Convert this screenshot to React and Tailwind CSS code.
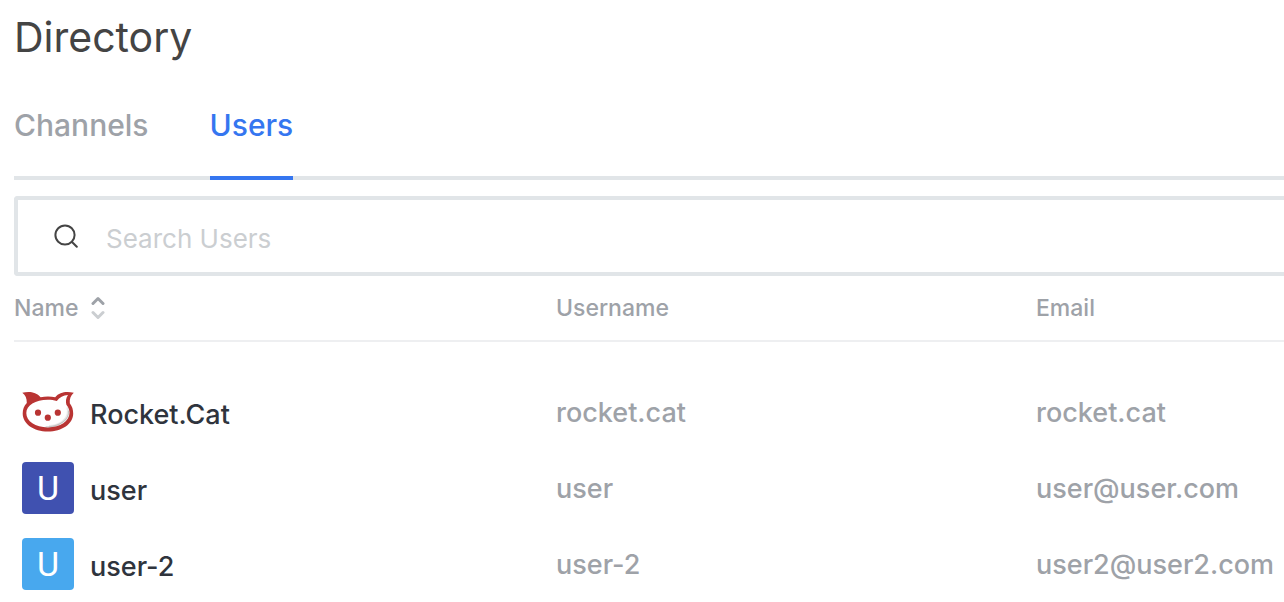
const users = [
  { name: 'Rocket.Cat', username: 'rocket.cat', email: 'rocket.cat', avatar: 'cat' },
  { name: 'user', username: 'user', email: 'user@user.com', avatar: 'bg-[#4051b0]' },
  { name: 'user-2', username: 'user-2', email: 'user2@user2.com', avatar: 'bg-[#48a8ee]' },
];

function RocketCat() {
  return (
    <svg viewBox="0 0 52 52" className="size-13 shrink-0" aria-hidden="true">
      <path
        d="M0.3 6.8C6 5.2 14 5.4 18.6 11.2C23 10.3 29 10.3 33.2 11.2C37.5 5.8 45 5 51.8 6.8C48.6 9.6 47.4 13 47.8 17.2C50.2 20.4 51.2 23.6 51.2 27.4C51.2 38 40 45.4 25.8 45.4C11.8 45.4 0.7 38 0.7 27.4C0.7 23.4 2 20 4.8 17C4.8 12.6 3.6 9.2 0.3 6.8Z"
        fill="#b93433"
      />
      <path
        d="M25.8 13.8C29 13.8 32 14.2 34.8 15.1C37.6 11.2 41.2 9.4 46 9C43.9 12 43.5 15.2 44.4 18.8C46.6 21.4 47.5 24 47.5 26.8C47.5 35.2 38.4 41.4 25.8 41.4C13.4 41.4 4.3 35.2 4.3 27C4.3 19.4 13.4 13.8 25.8 13.8Z"
        fill="#fff"
      />
      <g fill="none" stroke="#777" strokeLinecap="round">
        <path d="M45.6 22C48 31 40 39.2 28 40.2" strokeWidth="2.2" strokeOpacity="0.16" />
        <path d="M46.6 25C47.4 33.4 38.5 40.4 24 40.9" strokeWidth="1.2" strokeOpacity="0.32" />
      </g>
      <circle cx="16" cy="26.7" r="3.1" fill="#b93433" />
      <circle cx="35.8" cy="26.7" r="3.1" fill="#b93433" />
      <circle cx="25.8" cy="31.7" r="3.1" fill="#b93433" />
    </svg>
  );
}

function Avatar({ color }) {
  if (color === 'cat') return <RocketCat />;
  return (
    <span className={`flex size-13 shrink-0 items-center justify-center rounded font-['Roboto',sans-serif] text-[34px] leading-none font-normal text-white ${color}`}>
      U
    </span>
  );
}

export default function App() {
  return (
    <main className="overflow-hidden bg-white pl-3.5 font-['Inter',sans-serif]">
      <h1 className="pt-2 text-[41px] leading-[58px] text-[#444]">Directory</h1>

      <nav className="mt-[30px] flex gap-[61px] border-b-4 border-[#e1e5e8] text-[30px] leading-[58px] font-medium">
        <a href="#channels" className="-mb-1 h-[84px] border-b-4 border-transparent text-[#9ea2a8]">Channels</a>
        <a href="#users" aria-current="page" className="-mb-1 h-[84px] border-b-4 border-[#3576f0] text-[#3576f0]">Users</a>
      </nav>

      <label className="mt-4 flex h-20 items-center gap-7 rounded-l border-4 border-r-0 border-[#e1e5e8] pl-9">
        <svg viewBox="0 0 24 24" className="size-6 shrink-0" fill="none" stroke="#444" strokeWidth="2" strokeLinecap="round" aria-hidden="true">
          <circle cx="11" cy="11" r="9.6" />
          <path d="M18 18L22.8 22.8" />
        </svg>
        <input
          type="search"
          aria-label="Search Users"
          placeholder="Search Users"
          className="min-w-0 flex-1 bg-transparent pt-1.5 text-[26px] leading-10 text-[#444] outline-none placeholder:text-[#cbced1]"
        />
      </label>

      <table className="w-full table-fixed text-left">
        <colgroup>
          <col className="w-[542px]" />
          <col className="w-[480px]" />
          <col />
        </colgroup>
        <thead className="text-[23px] leading-8 text-[#9ea2a8]">
          <tr className="border-b-2 border-[#eeeff1]">
            <th aria-sort="ascending" className="pt-4 pb-4 font-medium">
              <button type="button" className="flex items-center gap-[13px]">
                Name
                <svg viewBox="0 0 14 24" className="h-6 w-3.5" fill="none" strokeWidth="3" strokeLinecap="round" strokeLinejoin="round" aria-hidden="true">
                  <path d="M2 7.5L7 2.5L12 7.5" stroke="#9ea2a8" />
                  <path d="M2 16.5L7 21.5L12 16.5" stroke="#cbced1" />
                </svg>
              </button>
            </th>
            <th className="pt-4 pb-4 font-medium">Username</th>
            <th className="pt-4 pb-4 font-medium">Email</th>
          </tr>
        </thead>
        <tbody className="text-[27px] leading-[54px] font-medium text-[#9ea2a8] before:block before:h-8">
          {users.map((user) => (
            <tr key={user.name}>
              <td className="px-2 py-3">
                <div className="flex h-13 gap-4 text-[#2f343d]">
                  <Avatar color={user.avatar} />
                  <span className="pt-0.5">{user.name}</span>
                </div>
              </td>
              <td className="pt-3 pb-2.5">{user.username}</td>
              <td className="pt-3 pb-2.5">{user.email}</td>
            </tr>
          ))}
        </tbody>
      </table>
    </main>
  );
}
